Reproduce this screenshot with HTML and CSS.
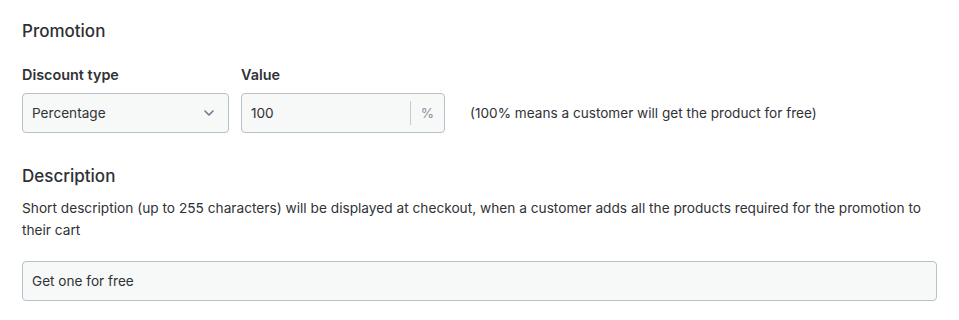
FILE: index.html
```html
<!DOCTYPE html>
<html lang="en">
<head>
    <meta charset="UTF-8">
    <title>Promotion</title>
    <link rel="stylesheet" href="styles.css">
</head>
<body>
<div class="page">
    <h2 class="section-title">Promotion</h2>
    <div class="field-row">
        <div class="field">
            <label class="field-label">Discount type</label>
            <div class="select-box">
                <span>Percentage</span>
                <svg class="chevron" width="10" height="6" viewBox="0 0 10 6"><path d="M1 1l4 4 4-4" fill="none" stroke="#6b7a8f" stroke-width="1.6" stroke-linecap="round" stroke-linejoin="round"/></svg>
            </div>
        </div>
        <div class="field">
            <label class="field-label">Value</label>
            <div class="value-box">
                <span class="value-text">100</span>
                <span class="suffix">%</span>
            </div>
        </div>
        <div class="hint">(100% means a customer will get the product for free)</div>
    </div>

    <h2 class="section-title desc-title">Description</h2>
    <p class="help">Short description (up to 255 characters) will be displayed at checkout, when a customer adds all the products required for the promotion to their cart</p>
    <div class="text-box">Get one for free</div>
</div>
</body>
</html>
```

FILE: styles.css
```css
body {
    margin: 0;
    font-family: Inter, "Noto Sans", sans-serif;
    color: #303236;
    background: #fff;
}
.page {
    padding: 20px 22px 0 22px;
}
.section-title {
    font-size: 17px;
    font-weight: 500;
    margin: 0;
    line-height: 22px;
    color: #2f3033;
}
.field-row {
    display: flex;
    align-items: flex-end;
    margin-top: 24px;
}
.field {
    display: flex;
    flex-direction: column;
    margin-right: 12px;
}
.field-label {
    font-size: 14.4px;
    font-weight: 600;
    line-height: 18px;
    margin-bottom: 9px;
}
.select-box, .value-box, .text-box {
    box-sizing: border-box;
    height: 40px;
    border: 1px solid #b8c0cc;
    border-radius: 4px;
    background: #f7f8f8;
    font-size: 13.6px;
    display: flex;
    align-items: center;
}
.select-box {
    width: 207px;
    padding: 0 10px 0 9px;
    justify-content: space-between;
}
.chevron {
    margin-right: 4px;
}
.value-box {
    width: 204px;
    padding: 0 0 0 9px;
}
.value-text {
    flex: 1;
}
.suffix {
    color: #8a94a3;
    border-left: 1px solid #c4cad3;
    height: 24px;
    line-height: 24px;
    width: 33px;
    text-align: center;
    font-size: 13.6px;
}
.hint {
    font-size: 13.6px;
    height: 40px;
    line-height: 40px;
    margin-left: 13px;
}
.desc-title {
    margin-top: 32px;
}
.help {
    font-size: 13.7px;
    line-height: 22px;
    margin: 10px 0 20px 0;
}
.text-box {
    width: 100%;
    padding: 0 9px;
}
```
